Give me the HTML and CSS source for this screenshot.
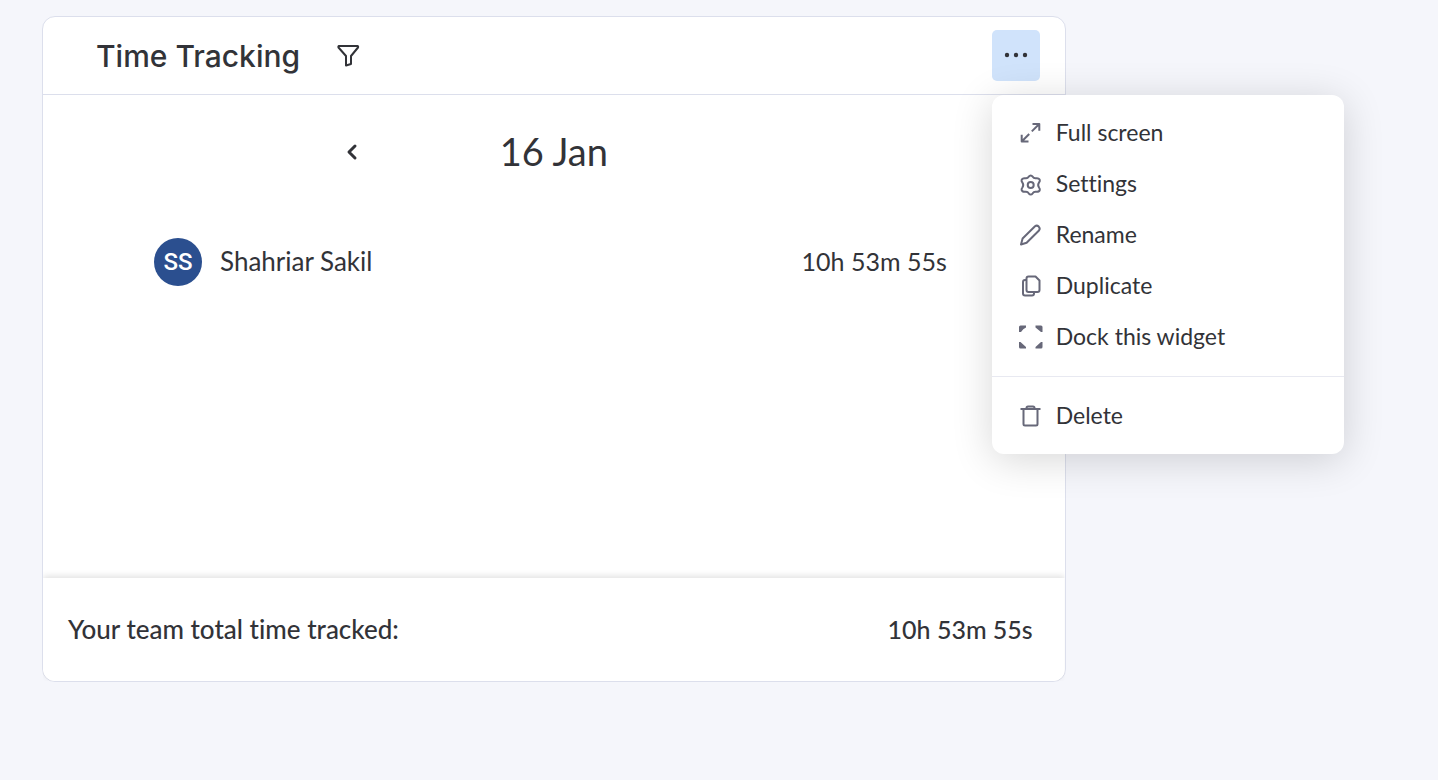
FILE: index.html
```html
<!DOCTYPE html>
<html lang="en">
<head>
<meta charset="utf-8">
<title>Time Tracking</title>
<link rel="stylesheet" href="styles.css">
</head>
<body>
<main class="board">
  <section class="widget">
    <header class="widget-header">
      <h1 class="widget-title">Time Tracking</h1>
      <button class="icon-button" type="button" aria-label="Filter">
        <svg width="24" height="24" viewBox="0 0 24 24" fill="none" stroke="currentColor" stroke-width="2" stroke-linejoin="round"><path d="M3 2h18.500q1 .5.5 1.500L15 12v8L10 21.500V12L2.500 3.500Q2 2.500 3 2z"/></svg>
      </button>
      <div class="more">
        <button class="more-button" type="button" aria-label="Widget menu" aria-expanded="true">
          <svg width="24" height="24" viewBox="0 0 24 24" fill="currentColor"><circle cx="3" cy="11" r="2.200"/><circle cx="12" cy="11" r="2.200"/><circle cx="21" cy="11" r="2.200"/></svg>
        </button>
        <div class="menu" role="menu">
          <button class="menu-item" type="button" role="menuitem">
            <svg class="menu-icon" viewBox="0 0 24 24"><path d="M13.500 2.900H20.300V9.800M20 3.200L12.800 10.400M10.200 13L3 20.200M2.700 13.700v6.800H9.500"/></svg>
            <span>Full screen</span>
          </button>
          <button class="menu-item" type="button" role="menuitem">
            <svg class="menu-icon" viewBox="0 0 24 24"><circle cx="11.700" cy="13" r="3"/><path d="M9.700 4.700Q11.700 2.300 13.700 4.700Q14.800 6.500 17 6.200Q20.200 5.900 20.800 8Q21.100 9.200 20 10.500Q18.300 13 20 15.500Q21.100 16.900 20.800 18Q20.200 20.100 17 19.800Q14.800 19.500 13.700 21.300Q11.700 23.700 9.700 21.300Q8.600 19.500 6.400 19.800Q3.200 20.100 2.600 18Q2.300 16.900 3.400 15.500Q5.100 13 3.400 10.500Q2.300 9.200 2.600 8Q3.200 5.900 6.400 6.200Q8.600 6.500 9.700 4.700z"/></svg>
            <span>Settings</span>
          </button>
          <button class="menu-item" type="button" role="menuitem">
            <svg class="menu-icon" viewBox="0 0 24 24"><path d="M2 21.500L3.600 15.500L16 3.300Q17.800 1.800 19.700 3.600Q21.500 5.500 20 7.500L7.600 19.800z"/></svg>
            <span>Rename</span>
          </button>
          <button class="menu-item" type="button" role="menuitem">
            <svg class="menu-icon" viewBox="0 0 24 24"><path d="M9.500 2.500h7L20.500 6.500v9.500q0 2-2 2h-9q-2 0-2-2V4.500q0-2 2-2z"/><path d="M7.500 6H6Q4 6 4 8V19.500q0 2 2 2H13q2 0 2-2V18"/></svg>
            <span>Duplicate</span>
          </button>
          <button class="menu-item" type="button" role="menuitem">
            <svg class="menu-icon menu-icon-solid" viewBox="0 0 24 24"><path d="M0 7V2Q0 .5 1.500.5H7V2.500Q4 3.500 2 7zM16.500.5h5.500q1.500 0 1.500 1.500v5H22L16.500 2.500zM0 17h1.500L7 22v1.500H1.500Q0 23.500 0 22zM22 17h1.500v5q0 1.500-1.500 1.500h-5.500V22z"/></svg>
            <span>Dock this widget</span>
          </button>
          <hr class="menu-divider">
          <button class="menu-item" type="button" role="menuitem">
            <svg class="menu-icon" viewBox="0 0 24 24"><path d="M1.500 5h20M7.500 5V4q0-1.500 1.500-1.500h5q1.500 0 1.500 1.500V5M4.500 5v15q0 1.500 1.500 1.500h11q1.500 0 1.500-1.500V5"/></svg>
            <span>Delete</span>
          </button>
        </div>
      </div>
    </header>
    <div class="widget-body">
      <div class="day-nav">
        <button class="prev-button" type="button" aria-label="Previous day">
          <svg width="16" height="20" viewBox="0 0 16 20" fill="none" stroke="currentColor" stroke-width="3" stroke-linecap="round" stroke-linejoin="round"><path d="M11 4L5 10l6 6"/></svg>
        </button>
        <h2 class="day">16 Jan</h2>
      </div>
      <ul class="people">
        <li class="person">
          <span class="avatar">SS</span>
          <span class="person-name">Shahriar Sakil</span>
          <span class="duration">10h 53m 55s</span>
        </li>
      </ul>
    </div>
    <footer class="widget-footer">
      <span>Your team total time tracked:</span>
      <span class="duration">10h 53m 55s</span>
    </footer>
  </section>
</main>
</body>
</html>
```
FILE: styles.css
```css
* {
  box-sizing: border-box;
}

body {
  margin: 0;
  background: #f5f6fb;
  color: #323338;
  font-family: Lato, "Open Sans", sans-serif;
  font-size: 26px;
  font-variant-ligatures: none;
}

button {
  border: 0;
  padding: 0;
  background: none;
  color: inherit;
  font: inherit;
  font-variant-ligatures: none;
  cursor: pointer;
}

svg {
  display: block;
}

.board {
  display: grid;
  grid-template-columns: minmax(0, 11fr) 4fr;
  padding: 16px 0 16px 42px;
}

.widget {
  border: 1px solid #dcdfec;
  border-radius: 13px;
  background: #fff;
}

.widget-header {
  display: flex;
  align-items: center;
  height: 78px;
  padding: 0 25px 0 53px;
  border-bottom: 1px solid #dcdfec;
}

.widget-title {
  margin: 0;
  font-family: Inter, sans-serif;
  font-size: 30px;
  font-weight: 500;
  line-height: 40px;
}

.icon-button {
  margin-left: 36px;
}

.more {
  position: relative;
  margin-left: auto;
}

.more-button {
  display: grid;
  place-items: center;
  width: 48px;
  height: 51px;
  border-radius: 5px;
  background: #d0e3fb;
}

.menu {
  position: absolute;
  top: 65px;
  left: 0;
  z-index: 1;
  width: 352px;
  padding: 12px 0 13px;
  border-radius: 12px;
  background: #fff;
  box-shadow: 0 6px 40px rgba(0, 0, 0, 0.16);
  font-size: 23px;
}

.menu-item {
  display: flex;
  align-items: center;
  gap: 13px;
  width: 100%;
  height: 51px;
  padding: 0 27px;
  text-align: left;
}

.menu-item span {
  padding-bottom: 2px;
}

.menu-icon {
  width: 24px;
  height: 24px;
  fill: none;
  stroke: #676879;
  stroke-width: 2;
  stroke-linejoin: round;
}

.menu-icon-solid {
  fill: #676879;
  stroke: none;
}

.menu-divider {
  margin: 14px 0 13px;
  border: 0;
  border-top: 1px solid #e8e9f1;
}

.widget-body {
  min-height: 483px;
  padding: 33px 0;
}

.day-nav {
  display: grid;
  grid-template-columns: 1fr auto 1fr;
  align-items: center;
  width: 41%;
  margin: 0 auto;
}

.prev-button {
  justify-self: start;
}

.day {
  margin: 0;
  padding-bottom: 2px;
  font-size: 38px;
  font-weight: 400;
  line-height: 46px;
}

.people {
  margin: 62px 0 0;
  padding: 0 118px 0 111px;
  list-style: none;
}

.person {
  display: flex;
  align-items: center;
}

.avatar {
  width: 48px;
  height: 48px;
  margin-right: 18px;
  border-radius: 50%;
  background: #2b4f8f;
  color: #fff;
  font-family: Roboto, sans-serif;
  font-size: 24px;
  font-weight: 500;
  line-height: 48px;
  text-align: center;
}

.duration {
  margin-left: auto;
  font-size: 25px;
}

.person-name,
.person .duration {
  padding-bottom: 2px;
}

.widget-footer {
  display: flex;
  align-items: center;
  justify-content: space-between;
  height: 103px;
  padding: 0 32px 2px 25px;
  border-radius: 0 0 12px 12px;
  background: #fff;
  box-shadow: 0 -2px 6px rgba(0, 0, 0, 0.12);
  clip-path: inset(-12px 0 0 0);
  font-weight: 500;
}
```
